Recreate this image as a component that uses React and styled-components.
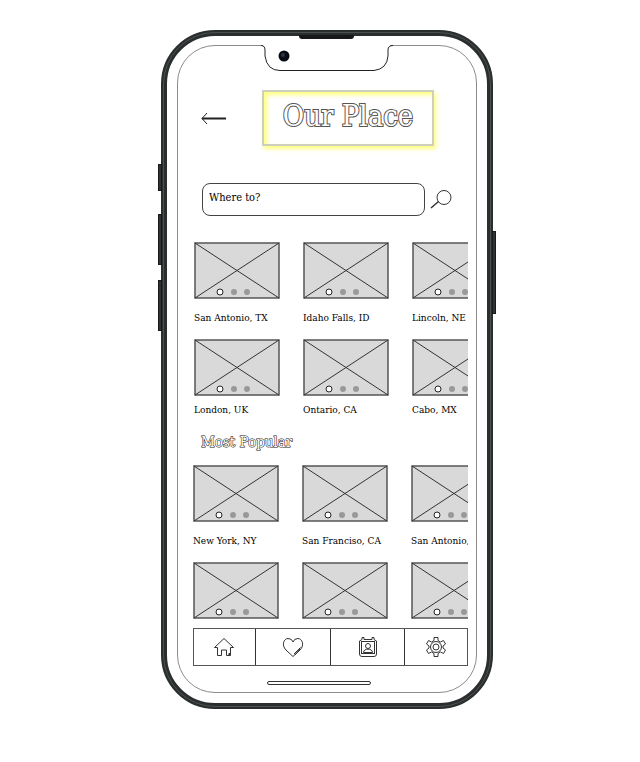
import React from "react";
import styled, { createGlobalStyle } from "styled-components";

const serif = '"DejaVu Serif Condensed", "DejaVu Serif", "Liberation Serif", serif';

const GlobalStyle = createGlobalStyle`
  * { box-sizing: border-box; }
  body { margin: 0; background: #fff; color: #000; font-family: ${serif}; }
  button, input { font: inherit; color: inherit; }
`;

const Page = styled.div`
  display: flex;
  justify-content: center;
  padding: 30px 0 50px 14px;
`;

const Phone = styled.div`
  position: relative;
  width: min(100%, 332px);
  aspect-ratio: 332 / 679;
  padding: 9px 10px 10px;
  display: flex;
  border: 6px solid #2b2e2f;
  border-radius: 54px;
  background: #fff;

  &::before {
    content: "";
    position: absolute;
    inset: -4px;
    border: 1px solid #4c5051;
    border-radius: 52px;
  }
`;

const SideKey = styled.span`
  position: absolute;
  ${(p) => (p.$right ? "right: -9px;" : "left: -9px;")}
  top: ${(p) => p.$top}px;
  width: 4px;
  height: ${(p) => p.$length}px;
  background: #303334;
  border: 1px solid #17191a;
`;

const Speaker = styled.span`
  position: absolute;
  top: -1px;
  left: 132px;
  width: 55px;
  height: 4px;
  background: #18181b;
  border-radius: 0 0 3px 3px;
`;

const Screen = styled.main`
  flex: 1;
  min-width: 0;
  display: flex;
  flex-direction: column;
  padding: 0 8px 7px 15px;
  border: 1px solid #8b8b8b;
  border-radius: 38px;
`;

const Notch = styled.svg`
  position: absolute;
  top: 8px;
  left: 94px;
  width: 132px;
  height: 28px;
`;

const Header = styled.header`
  display: flex;
  align-items: center;
  gap: 34px;
  margin-top: 44px;
  padding-left: 8px;
`;

const IconButton = styled.button`
  display: flex;
  padding: 0;
  border: 0;
  background: none;
`;

const Title = styled.h1`
  display: flex;
  align-items: center;
  justify-content: center;
  margin: 0;
  width: 172px;
  height: 56px;
  padding-bottom: 4px;
  border: 2px solid #cfcfbf;
  box-shadow: 2px 3px 4px #ffff80, inset 3px 3px 4px #ffff80;
  font-size: 29px;
  font-weight: 400;
  white-space: nowrap;
  color: #fff;
  paint-order: stroke fill;
  -webkit-text-stroke: 2px #555;
`;

const Search = styled.form`
  display: flex;
  align-items: center;
  gap: 5px;
  margin: 37px 0 26px;
  padding: 0 14px 0 9px;
`;

const SearchInput = styled.input`
  flex: 1;
  min-width: 0;
  height: 33px;
  padding: 0 8px 4px 6px;
  border: 1px solid #444;
  border-radius: 8px;
  background: #fff;
  font-size: 11px;
  &::placeholder { color: #000; opacity: 1; }
`;

const Feed = styled.div`
  flex: 1;
  min-height: 0;
  overflow: hidden;
`;

const Grid = styled.section`
  display: grid;
  grid-template-columns: repeat(3, 86px);
  column-gap: 23px;
  row-gap: 14px;
  padding-left: ${(p) => (p.$inset ? 1 : 0)}px;
`;

const SectionTitle = styled.h2`
  margin: 15px 0 13px 8px;
  font-size: 15px;
  line-height: 20px;
  font-weight: 400;
  color: #fff;
  paint-order: stroke fill;
  -webkit-text-stroke: 1px #111;
`;

const Card = styled.figure`
  margin: 0;
`;

const Picture = styled.svg`
  display: block;
  width: 86px;
  height: 57px;
`;

const Caption = styled.figcaption`
  margin-top: ${(p) => (p.$tight ? 6 : 11)}px;
  font-size: 10px;
  line-height: 15px;
  white-space: nowrap;
`;

const TabBar = styled.nav`
  display: grid;
  grid-template-columns: 61fr 76fr 75fr 63fr;
  height: 38px;
  border: 1px solid #555;
`;

const Tab = styled.button`
  display: flex;
  align-items: center;
  justify-content: center;
  padding: 0;
  border: 0;
  background: #fff;
  & + & { border-left: 1px solid #333; }
`;

const HomeIndicator = styled.div`
  align-self: center;
  width: 104px;
  height: 4px;
  margin: 15px 24px 0 0;
  border: 1px solid #333;
  border-radius: 2px;
`;

const nearby = ["San Antonio, TX", "Idaho Falls, ID", "Lincoln, NE", "London, UK", "Ontario, CA", "Cabo, MX"];
const popular = ["New York, NY", "San Franciso, CA", "San Antonio, TX", "Jackson, WY", "Dubai", "Nome"];

function Places({ names, label, inset }) {
  return (
    <Grid aria-label={label} $inset={inset}>
      {names.map((name, i) => (
        <Card key={name}>
          <Picture viewBox="0 0 86 57" fill="none" aria-hidden="true">
            <rect x="1" y="1" width="84" height="55" fill="#d9d9d9" stroke="#555" strokeWidth="1.5" />
            <path d="M1 1 85 56M85 1 1 56" stroke="#333" />
            <circle cx="26" cy="50" r="3" fill="#fff" stroke="#222" />
            <circle cx="40" cy="50" r="3" fill="#999" />
            <circle cx="53" cy="50" r="3" fill="#999" />
          </Picture>
          <Caption $tight={i >= 3}>{name}</Caption>
        </Card>
      ))}
    </Grid>
  );
}

const Icon = ({ children }) => (
  <svg width="22" height="22" viewBox="0 0 22 22" fill="none" stroke="#333" aria-hidden="true">
    {children}
  </svg>
);

export default function App() {
  return (
    <>
      <GlobalStyle />
      <Page>
        <Phone>
          <SideKey $top={128} $length={27} />
          <SideKey $top={178} $length={51} />
          <SideKey $top={244} $length={51} />
          <SideKey $right $top={195} $length={83} />
          <Speaker />
          <Notch viewBox="0 0 132 28" fill="none">
            <path d="M2 0H129V3H2Z" fill="#fff" />
            <path d="M0 1.5Q4 1.5 4 6V12Q6 26.5 19 26.5H113Q126 25 127 12V6Q127 1.5 132 1.5" stroke="#222" />
            <circle cx="23" cy="12" r="5.5" fill="#090b18" />
            <circle cx="22" cy="11" r="2" fill="#30363c" />
          </Notch>
          <Screen>
            <Header>
              <IconButton aria-label="Back">
                <svg width="27" height="14" viewBox="0 0 27 14" fill="none" stroke="#222">
                  <path d="M1 7.5H25" strokeWidth="2" />
                  <path d="M6 2 1 7.5 6 13" />
                </svg>
              </IconButton>
              <Title>Our Place</Title>
            </Header>
            <Search>
              <SearchInput aria-label="Where to?" placeholder="Where to?" />
              <IconButton type="button" aria-label="Search">
                <svg width="24" height="20" viewBox="0 0 24 20" fill="none" stroke="#333">
                  <circle cx="14" cy="7.5" r="7" />
                  <path d="M8.5 11.5 1 18" strokeWidth="1.5" />
                </svg>
              </IconButton>
            </Search>
            <Feed>
              <Places names={nearby} label="Places" inset />
              <SectionTitle>Most Popular</SectionTitle>
              <Places names={popular} label="Most Popular" />
            </Feed>
            <TabBar>
              <Tab aria-label="Home">
                <Icon>
                  <path d="M1.5 11.5 11 2.5 20.5 11.5H17.5V19.5H13.5V14H8.5V19.5H4.5V11.5Z" />
                  <path d="M15.5 18H17.5" strokeWidth="2" />
                </Icon>
              </Tab>
              <Tab aria-label="Favorites">
                <Icon>
                  <path d="M11 20.5 4 14C-1 9 2 2.5 6 2.5Q10 2.5 11 6 12 2.5 16 2.5C20 2.5 23 9 18 14Z" />
                  <path d="M12 18 18.5 11.5M13 19 18 13" />
                </Icon>
              </Tab>
              <Tab aria-label="Profile">
                <Icon>
                  <path d="M5 3.5V1.5H7V3.5H15V1.5H17V3.5L19.5 5V18Q19.5 20.5 17 20.5H5Q2.5 20.5 2.5 18V5Z" />
                  <rect x="4.5" y="5.5" width="13" height="12" />
                  <path d="M6.5 16.5C6.5 12 15.5 12 15.5 16.5Z" />
                  <circle cx="11" cy="10" r="2.5" />
                </Icon>
              </Tab>
              <Tab aria-label="Settings">
                <Icon>
                  <path d="M9 1.5H13V4.5L15.5 6 18.5 4.5 20.5 8 18 10V12L20.5 14 18.5 17.5 15.5 16 13 17.5V20.5H9V17.5L6.5 16 3.5 17.5 1.5 14 4 12V10L1.5 8 3.5 4.5 6.5 6 9 4.5Z" />
                  <circle cx="11" cy="11" r="5.5" />
                  <circle cx="11" cy="11" r="3" />
                </Icon>
              </Tab>
            </TabBar>
            <HomeIndicator />
          </Screen>
        </Phone>
      </Page>
    </>
  );
}
